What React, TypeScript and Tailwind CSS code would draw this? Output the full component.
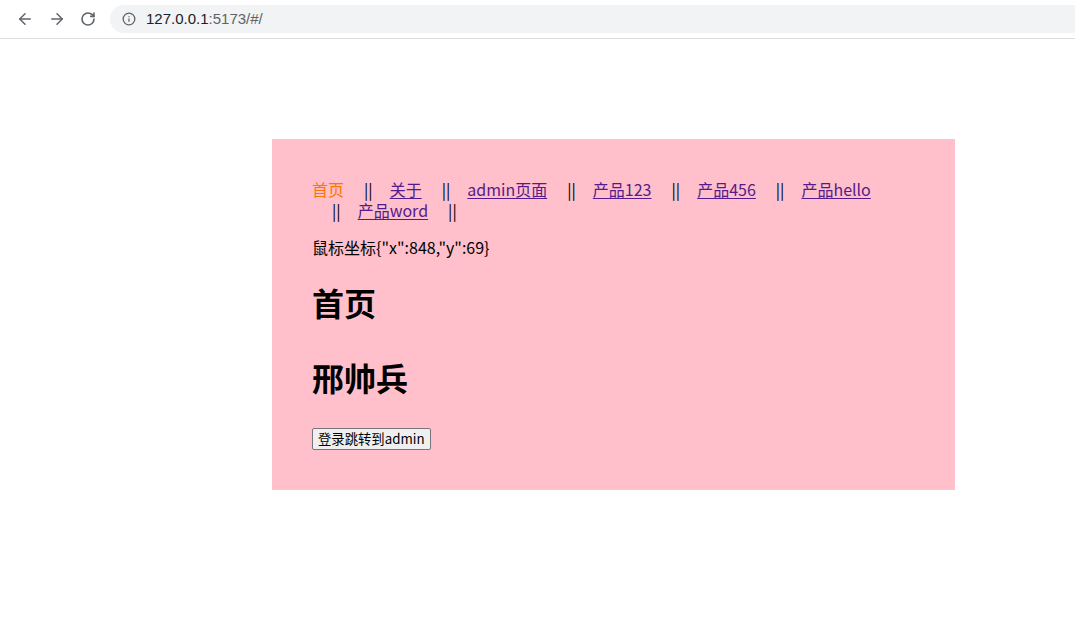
import { ArrowLeft, ArrowRight, RotateCw, Info } from "lucide-react";

const links = [
  { label: "首页", active: true },
  { label: "关于" },
  { label: "admin页面" },
  { label: "产品123" },
  { label: "产品456" },
  { label: "产品hello" },
  { label: "产品word" },
];

const font = "font-['Microsoft_YaHei','Noto_Sans_CJK_SC',sans-serif]";

export default function App() {
  return (
    <div className={`h-[617px] w-[1075px] bg-white ${font}`}>
      {/* browser chrome */}
      <div className="flex h-[39px] items-center border-b border-[#dadce0] bg-white">
        <div className="flex items-center gap-[14px] pl-[16px] text-[#5f6368]">
          <ArrowLeft size={18} strokeWidth={2} />
          <ArrowRight size={18} strokeWidth={2} />
          <RotateCw size={16} strokeWidth={2.4} />
        </div>
        <div className="ml-[14px] flex h-[28px] flex-1 items-center rounded-l-full bg-[#f1f3f4] pl-[12px] font-['Liberation_Sans',sans-serif] text-[15px]">
          <Info size={14} className="text-[#5f6368]" strokeWidth={2.2} />
          <span className="ml-[10px] text-[#202124]">127.0.0.1</span>
          <span className="text-[#5f6368]">:5173/#/</span>
        </div>
      </div>

      <div className="pt-[100px]">
        <div className="ml-[272px] w-[683px] bg-[#ffc0cb] px-[40px] py-[40px] text-black">
          <div className="w-[575px] text-[16px] leading-[21px]">
            {links.map((l) => [
              <a
                key={l.label}
                href="#"
                className={
                  l.active
                    ? "inline-block whitespace-nowrap text-[#ff7300]"
                    : "inline-block whitespace-nowrap text-[#551a8b] underline underline-offset-2"
                }
              >
                {l.label}
              </a>,
              <span key={l.label + "-sep"} className="ml-[20px] mr-[17px] inline-block whitespace-nowrap text-black">
                ||
              </span>,
            ])}
          </div>
          <p className="mt-4 text-[16px] leading-[21px]">鼠标坐标{'{"x":848,"y":69}'}</p>
          <h1 className="mt-[23px] text-[32px] font-bold leading-[42px]">首页</h1>
          <h1 className="mt-[33px] text-[32px] font-bold leading-[42px]">邢帅兵</h1>
          <button className="mt-[30px] h-[22px] rounded-[2px] border border-[#767676] bg-[#efefef] px-[5px] text-[13.33px] leading-[18px]">
            登录跳转到admin
          </button>
        </div>
      </div>
    </div>
  );
}
